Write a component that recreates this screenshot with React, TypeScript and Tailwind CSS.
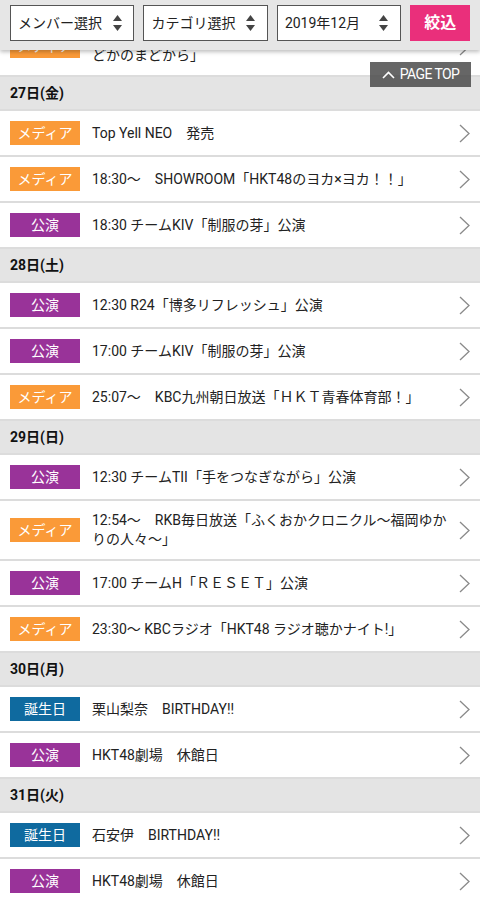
import React from 'react'

type Kind = 'media' | 'stage' | 'birthday'

interface EventItem {
  kind: Kind
  text: string
}

interface DayGroup {
  label: string
  items: EventItem[]
}

const BADGE: Record<Kind, { label: string; cls: string }> = {
  media: { label: 'メディア', cls: 'bg-[#fa9a38]' },
  stage: { label: '公演', cls: 'bg-[#993399]' },
  birthday: { label: '誕生日', cls: 'bg-[#0f6a9f]' },
}

const DAYS: DayGroup[] = [
  {
    label: '27日(金)',
    items: [
      { kind: 'media', text: 'Top Yell NEO　発売' },
      { kind: 'media', text: '18:30〜　SHOWROOM「HKT48のヨカ×ヨカ！！」' },
      { kind: 'stage', text: '18:30 チームKIV「制服の芽」公演' },
    ],
  },
  {
    label: '28日(土)',
    items: [
      { kind: 'stage', text: '12:30 R24「博多リフレッシュ」公演' },
      { kind: 'stage', text: '17:00 チームKIV「制服の芽」公演' },
      { kind: 'media', text: '25:07〜　KBC九州朝日放送「ＨＫＴ青春体育部！」' },
    ],
  },
  {
    label: '29日(日)',
    items: [
      { kind: 'stage', text: '12:30 チームTII「手をつなぎながら」公演' },
      { kind: 'media', text: '12:54〜　RKB毎日放送「ふくおかクロニクル〜福岡ゆかりの人々〜」' },
      { kind: 'stage', text: '17:00 チームH「ＲＥＳＥＴ」公演' },
      { kind: 'media', text: '23:30〜 KBCラジオ「HKT48 ラジオ聴かナイト!」' },
    ],
  },
  {
    label: '30日(月)',
    items: [
      { kind: 'birthday', text: '栗山梨奈　BIRTHDAY!!' },
      { kind: 'stage', text: 'HKT48劇場　休館日' },
    ],
  },
  {
    label: '31日(火)',
    items: [
      { kind: 'birthday', text: '石安伊　BIRTHDAY!!' },
      { kind: 'stage', text: 'HKT48劇場　休館日' },
    ],
  },
]

// up/down arrows inside the select boxes
function SelectArrows() {
  return (
    <svg width="9" height="16" viewBox="0 0 9 16" className="shrink-0">
      <path d="M4.5 0 L9 6 L0 6 Z" fill="#444" />
      <path d="M4.5 16 L9 10 L0 10 Z" fill="#444" />
    </svg>
  )
}

function Chevron() {
  return (
    <svg width="11" height="19" viewBox="0 0 11 19" className="shrink-0">
      <polyline points="1,1 10,9.5 1,18" fill="none" stroke="#8a8a8a" strokeWidth="1.3" />
    </svg>
  )
}

function FakeSelect({ label, arrowGap }: { label: string; arrowGap: string }) {
  return (
    <div className="flex h-[36px] w-[125px] items-center border border-[#555] bg-white pl-[7px]">
      <span className="text-[14px] leading-none text-[#222]">{label}</span>
      <span className={arrowGap}>
        <SelectArrows />
      </span>
    </div>
  )
}

function Row({ item }: { item: EventItem }) {
  const b = BADGE[item.kind]
  return (
    <div className="flex items-center border-b-2 border-[#dcdcdc] bg-white py-[10px] pl-[10px] pr-[10px]">
      <div
        className={`flex h-[24px] w-[70px] shrink-0 items-center justify-center text-[14px] leading-none text-white ${b.cls}`}
      >
        {b.label}
      </div>
      <div className="ml-[12px] mr-[6px] flex-1 whitespace-pre-line text-[14px] leading-[19px] text-[#222]">
        {item.text}
      </div>
      <Chevron />
    </div>
  )
}

export default function App() {
  return (
    <div
      className="relative h-[898px] w-[480px] overflow-hidden bg-white"
      style={{ fontFamily: 'Roboto, "Noto Sans CJK JP", sans-serif' }}
    >
      {/* ── sticky filter bar ── */}
      <div className="relative z-10 flex h-[50px] items-start gap-[9px] bg-[#e6e6e6] px-[10px] pt-[5px] shadow-[0_2px_4px_rgba(0,0,0,0.25)]">
        <FakeSelect label="メンバー選択" arrowGap="ml-[11px]" />
        <FakeSelect label="カテゴリ選択" arrowGap="ml-[11px]" />
        <FakeSelect label="2019年12月" arrowGap="ml-auto mr-[12px]" />
        <button className="flex h-[36px] w-[60px] items-center justify-center bg-[#ea2f7b] text-[16px] font-bold text-white">
          絞込
        </button>
      </div>

      {/* PAGE TOP */}
      <div className="absolute left-[370px] top-[62px] z-20 flex h-[25px] w-[101px] items-center justify-center gap-[5px] bg-[rgba(75,75,75,0.85)] text-[14px] text-white">
        <svg width="13" height="8" viewBox="0 0 13 8">
          <polyline points="1,7 6.5,1.5 12,7" fill="none" stroke="white" strokeWidth="1.6" />
        </svg>
        <span className="tracking-[-0.6px]">PAGE TOP</span>
      </div>

      {/* ── schedule list (scrolled: first item cut by the bar) ── */}
      <div className="flex h-[27px] flex-col justify-end overflow-hidden">
        <Row item={{ kind: 'media', text: '18:15〜　FBS福岡放送「めんたいワイド　ほの\nどかのまどから」' }} />
      </div>
      {DAYS.map((d) => (
        <div key={d.label}>
          <div className="flex h-[34px] items-center border-b-2 border-[#dcdcdc] bg-[#e4e4e4] px-[10px] text-[14px] font-bold text-[#111]">
            {d.label}
          </div>
          {d.items.map((it, i) => (
            <Row key={i} item={it} />
          ))}
        </div>
      ))}
    </div>
  )
}
